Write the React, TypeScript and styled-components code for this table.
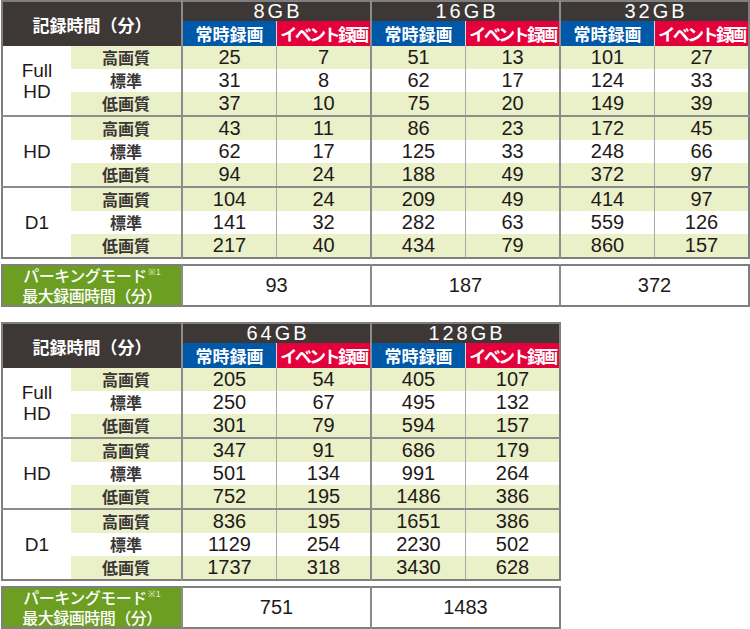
import React from 'react'
import styled, { createGlobalStyle } from 'styled-components'

type Group = {
  label: string[],
  rows: number[][],
}

type Sheet = {
  caps: string[],
  groups: Group[],
  parking: number[],
  width: number,
}

const qualities = ['高画質', '標準', '低画質']

const sheets: Sheet[] = [
  {
    caps: ['8GB', '16GB', '32GB'],
    width: 748,
    groups: [
      { label: ['Full', 'HD'], rows: [[25, 7, 51, 13, 101, 27], [31, 8, 62, 17, 124, 33], [37, 10, 75, 20, 149, 39]] },
      { label: ['HD'], rows: [[43, 11, 86, 23, 172, 45], [62, 17, 125, 33, 248, 66], [94, 24, 188, 49, 372, 97]] },
      { label: ['D1'], rows: [[104, 24, 209, 49, 414, 97], [141, 32, 282, 63, 559, 126], [217, 40, 434, 79, 860, 157]] },
    ],
    parking: [93, 187, 372],
  },
  {
    caps: ['64GB', '128GB'],
    width: 560,
    groups: [
      { label: ['Full', 'HD'], rows: [[205, 54, 405, 107], [250, 67, 495, 132], [301, 79, 594, 157]] },
      { label: ['HD'], rows: [[347, 91, 686, 179], [501, 134, 991, 264], [752, 195, 1486, 386]] },
      { label: ['D1'], rows: [[836, 195, 1651, 386], [1129, 254, 2230, 502], [1737, 318, 3430, 628]] },
    ],
    parking: [751, 1483],
  },
]

const GlobalStyle = createGlobalStyle`
  html, body {
    margin: 0;
    padding: 0;
    background: #ffffff;
  }
  body {
    font-family: "Liberation Sans", "Noto Sans CJK JP", sans-serif;
    color: #1f1a19;
  }
`

const Page = styled.div`
  width: 750px;
  padding: 0 0 0 1px;
  box-sizing: border-box;
  display: flex;
  flex-direction: column;
  gap: 15px;
`

const Block = styled.section<{ $width: number }>`
  width: ${p => p.$width}px;
  display: flex;
  flex-direction: column;
  gap: 5px;
`

const Grid = styled.table`
  width: 100%;
  border-collapse: collapse;
  table-layout: fixed;
  border: 2px solid #7f7f7f;
`

const Col = styled.col<{ $w: number }>`
  width: ${p => p.$w}px;
`

const HeadCell = styled.th`
  background: #3d3736;
  color: #ffffff;
  font-family: "Noto Sans CJK JP", sans-serif;
  font-size: 17px;
  font-weight: 700;
  padding: 0;
`

const CapCell = styled.th`
  background: #3d3736;
  color: #ffffff;
  height: 19px;
  padding: 0 0 0 3px;
  font-size: 20px;
  font-weight: 400;
  letter-spacing: 3px;
  line-height: 19px;
  border-left: 2px solid #8c8c8c;
`

const SubCell = styled.th<{ $event?: boolean }>`
  background: ${p => (p.$event ? '#e4003b' : '#0058a8')};
  color: #ffffff;
  height: 25px;
  padding: 0;
  font-family: "Noto Sans CJK JP", sans-serif;
  font-size: 17px;
  font-weight: 700;
  letter-spacing: ${p => (p.$event ? '-2.6px' : '0')};
  line-height: 25px;
  white-space: nowrap;
  border-left: ${p => (p.$event ? '1px solid #d9d9d9' : '2px solid #8c8c8c')};
`

const Row = styled.tr<{ $groupStart?: boolean }>`
  height: 23px;
  border-top: ${p => (p.$groupStart ? '2px solid #8c8c8c' : 'none')};
`

const GroupCell = styled.td`
  background: #ffffff;
  text-align: center;
  padding: 0;
  font-size: 19px;
  line-height: 21px;
  color: #1f1a19;
`

const QualityCell = styled.td<{ $shade: boolean }>`
  background: ${p => (p.$shade ? '#eaf0c8' : '#ffffff')};
  text-align: center;
  padding: 0;
  font-family: "Noto Sans CJK JP", sans-serif;
  font-size: 16px;
  font-weight: 700;
  color: #3a3636;
  line-height: 23px;
`

const ValueCell = styled.td<{ $shade: boolean, $second: boolean }>`
  background: ${p => (p.$shade ? '#eaf0c8' : '#ffffff')};
  text-align: center;
  padding: 0;
  font-size: 20px;
  line-height: 23px;
  color: #1f1a19;
  border-left: ${p => (p.$second ? '1px solid #a8a8a8' : '2px solid #8c8c8c')};
`

const ParkRow = styled.tr`
  height: 40px;
`

const ParkLabel = styled.th`
  background: #6b9e21;
  color: #ffffff;
  padding: 0;
  font-family: "Noto Sans CJK JP", sans-serif;
  font-size: 16px;
  font-weight: 500;
  letter-spacing: -0.5px;
  white-space: nowrap;
`

const ParkLine = styled.div`
  height: 19.5px;
  line-height: 19.5px;
`

const Note = styled.span`
  font-family: "Liberation Sans", sans-serif;
  font-size: 9px;
  letter-spacing: 0;
  vertical-align: top;
  line-height: 12px;
  margin-left: 1px;
  color: #e6eed6;
`

const ParkValue = styled.td`
  text-align: center;
  padding: 0;
  font-size: 20px;
  color: #1f1a19;
  border-left: 2px solid #8c8c8c;
`

const DurationTable: React.FC<{ sheet: Sheet }> = ({ sheet }) => {
  const dataCols = sheet.caps.length * 2
  return (
    <Block $width={sheet.width}>
      <Grid>
        <colgroup>
          <Col $w={69} />
          <Col $w={111} />
          {Array.from({ length: dataCols }).map((_, i) => <Col key={i} $w={94.5} />)}
        </colgroup>
        <thead>
          <tr>
            <HeadCell rowSpan={2} colSpan={2}>記録時間（分）</HeadCell>
            {sheet.caps.map(cap => <CapCell key={cap} colSpan={2}>{cap}</CapCell>)}
          </tr>
          <tr>
            {sheet.caps.map(cap => (
              <React.Fragment key={cap}>
                <SubCell>常時録画</SubCell>
                <SubCell $event>イベント録画</SubCell>
              </React.Fragment>
            ))}
          </tr>
        </thead>
        <tbody>
          {sheet.groups.map((group, gi) =>
            group.rows.map((values, ri) => (
              <Row key={`${gi}-${ri}`} $groupStart={gi > 0 && ri === 0}>
                {ri === 0 ? (
                  <GroupCell rowSpan={3}>
                    {group.label.map((line, li) => <div key={li}>{line}</div>)}
                  </GroupCell>
                ) : null}
                <QualityCell $shade={ri !== 1}>{qualities[ri]}</QualityCell>
                {values.map((v, vi) => (
                  <ValueCell key={vi} $shade={ri !== 1} $second={vi % 2 === 1}>{v}</ValueCell>
                ))}
              </Row>
            ))
          )}
        </tbody>
      </Grid>
      <Grid>
        <colgroup>
          <Col $w={180} />
          {sheet.parking.map((_, i) => <Col key={i} $w={189} />)}
        </colgroup>
        <tbody>
          <ParkRow>
            <ParkLabel>
              <ParkLine>パーキングモード<Note>※1</Note></ParkLine>
              <ParkLine>最大録画時間（分）</ParkLine>
            </ParkLabel>
            {sheet.parking.map((v, i) => <ParkValue key={i}>{v}</ParkValue>)}
          </ParkRow>
        </tbody>
      </Grid>
    </Block>
  )
}

const App: React.FC = () => {
  return (
    <>
      <GlobalStyle />
      <Page>
        {sheets.map((sheet, i) => <DurationTable key={i} sheet={sheet} />)}
      </Page>
    </>
  )
}

export default App
